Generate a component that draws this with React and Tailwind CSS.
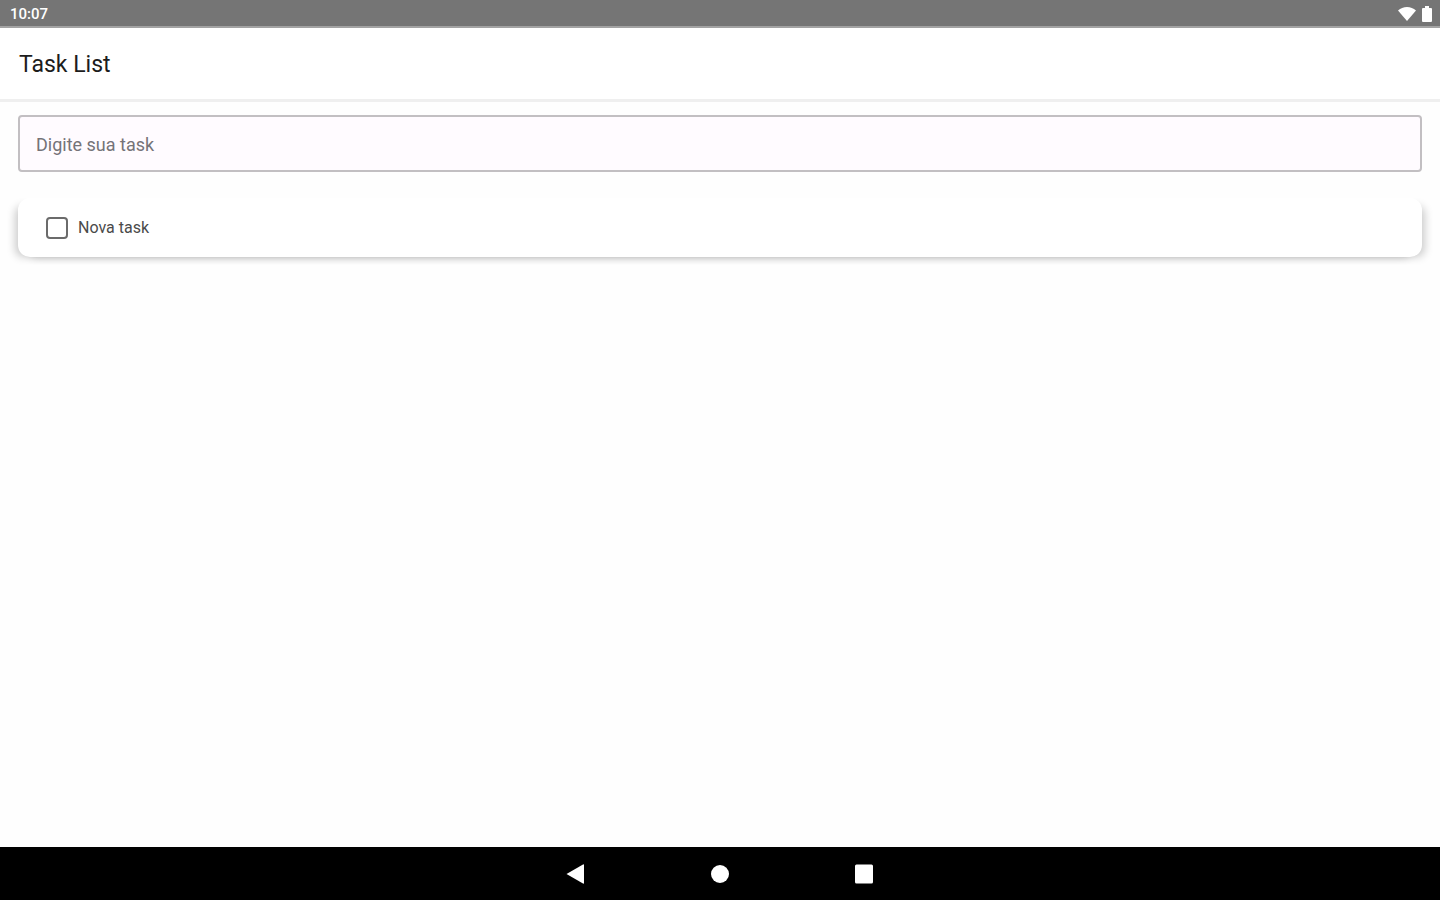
import React, { useState } from "react";

const StatusBar = () => (
  <div className="flex h-7 items-center justify-between border-b-2 border-[#a3a3a3] bg-[#757575] pt-0.5 pr-2 pl-2.5 text-white">
    <span className="text-[15px] font-medium">10:07</span>
    <div className="flex items-center gap-1.5">
      <svg viewBox="0 0 18 14" className="h-3.5 w-[18px]" fill="currentColor" aria-hidden="true">
        <path d="M9 14 0 3.5C2.5 1.2 5.6 0 9 0s6.500 1.200 9 3.500z" />
      </svg>
      <svg viewBox="0 0 10 16" className="h-4 w-2.5" fill="currentColor" aria-hidden="true">
        <path d="M3 0h4v2h2q1 0 1 1v12q0 1-1 1H1q-1 0-1-1V3q0-1 1-1h2z" />
      </svg>
    </div>
  </div>
);

const TaskItem = ({ task, onToggle }) => (
  <li className="rounded-xl bg-white shadow-[-7px_4px_9px_-4px_rgba(0,0,0,0.2),7px_4px_9px_-4px_rgba(0,0,0,0.2)]">
    <label className="flex h-[59px] items-center gap-2.5 px-7 text-base text-[#4a4a4a]">
      <input
        type="checkbox"
        checked={task.done}
        onChange={() => onToggle(task.id)}
        className="size-[22px] appearance-none rounded border-2 border-[#6b6b6b] checked:bg-[#6b6b6b]"
      />
      {task.title}
    </label>
  </li>
);

const NavigationBar = () => (
  <nav className="flex h-[53px] items-center justify-center gap-[120px] bg-black text-white">
    <button aria-label="Back">
      <svg viewBox="0 0 24 24" className="size-6" fill="currentColor">
        <path d="M2.500 12 19 2.500q1-.5 1 .500v18q0 1-1 .500z" />
      </svg>
    </button>
    <button aria-label="Home">
      <svg viewBox="0 0 24 24" className="size-6" fill="currentColor">
        <circle cx="12" cy="12" r="9" />
      </svg>
    </button>
    <button aria-label="Recent apps">
      <svg viewBox="0 0 24 24" className="size-6" fill="currentColor">
        <rect x="3" y="2.500" width="18" height="19" rx="1.500" />
      </svg>
    </button>
  </nav>
);

const App = () => {
  const [text, setText] = useState("");
  const [tasks, setTasks] = useState([{ id: 1, title: "Nova task", done: false }]);

  const handleSubmit = (e) => {
    e.preventDefault();
    if (!text.trim()) return;
    setTasks((prev) => [...prev, { id: Date.now(), title: text.trim(), done: false }]);
    setText("");
  };

  const handleToggle = (id) => {
    setTasks((prev) => prev.map((t) => (t.id === id ? { ...t, done: !t.done } : t)));
  };

  return (
    <div className="flex min-h-screen flex-col bg-[#fefefe] font-[Roboto,sans-serif]">
      <StatusBar />
      <header className="flex h-[74px] items-center border-b-3 border-[#efefef] bg-white px-[19px] pt-1">
        <h1 className="text-[23px] text-[#1c1c1c]">Task List</h1>
      </header>

      <main className="flex-1 px-[18px] pt-[13px]">
        <form onSubmit={handleSubmit}>
          <input
            type="text"
            value={text}
            onChange={(e) => setText(e.target.value)}
            placeholder="Digite sua task"
            aria-label="Digite sua task"
            className="h-[57px] w-full rounded border-2 border-[#c2bfc2] bg-[#fffbff] px-4 pt-0.5 text-lg text-[#1c1c1c] placeholder:text-[#757378]"
          />
        </form>
        <ul className="mt-[26px] flex flex-col gap-4">
          {tasks.map((task) => (
            <TaskItem key={task.id} task={task} onToggle={handleToggle} />
          ))}
        </ul>
      </main>

      <NavigationBar />
    </div>
  );
};

export default App;
